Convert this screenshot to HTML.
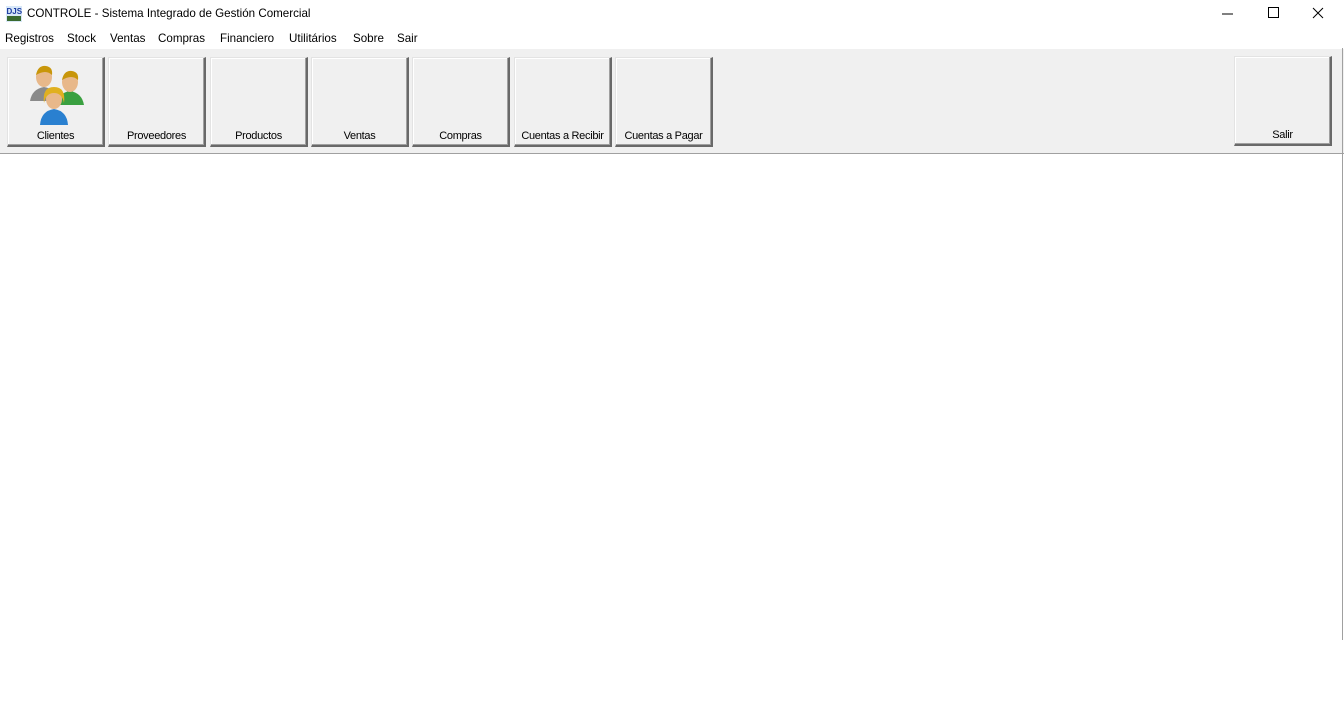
<!DOCTYPE html>
<html><head><meta charset="utf-8"><style>
*{margin:0;padding:0;box-sizing:border-box}
body{width:1344px;height:716px;background:#fff;font-family:"Liberation Sans",sans-serif;font-size:12px;color:#000;position:relative;overflow:hidden}
.abs{position:absolute}
.title{left:27px;top:7px;font-size:11.6px;white-space:nowrap}
.m{position:absolute;top:32px;font-size:11.6px;white-space:nowrap;transform-origin:left top}
.tb{left:0;top:48px;width:1344px;height:106px;background:#f0f0f0;border-top:1px solid #fff;border-bottom:1px solid #a0a0a0}
.btn{position:absolute;top:57px;width:98px;height:90px;background:#f0f0f0;border-top:1px solid #e3e3e3;border-left:1px solid #e3e3e3;border-right:2px solid #696969;border-bottom:2px solid #696969;box-shadow:inset -1px -1px 0 #a0a0a0, inset 1px 1px 0 #fff;text-align:center}
.btn span{position:absolute;bottom:3px;left:0;right:0;font-size:11px;letter-spacing:-0.3px;white-space:nowrap}
</style></head><body>
<svg class="abs" style="left:6px;top:6px" width="16" height="16" viewBox="0 0 16 16"><rect width="16" height="16" fill="#d8e8f8"/><text x="0.5" y="8" font-size="8" font-weight="bold" fill="#1a3aa0" font-family="Liberation Sans">DJS</text><rect x="1" y="10" width="14" height="5" fill="#3a6a30"/></svg>
<div class="abs title">CONTROLE - Sistema Integrado de Gestión Comercial</div>
<svg class="abs" style="left:1222px;top:6px" width="110" height="16"><line x1="0" y1="8" x2="11" y2="8" stroke="#000"/><rect x="46.5" y="1.5" width="10" height="10" fill="none" stroke="#000"/><path d="M91 2 L101 12 M101 2 L91 12" stroke="#000"/></svg>
<div class="m" style="left:5px">Registros</div>
<div class="m" style="left:67px">Stock</div>
<div class="m" style="left:110px">Ventas</div>
<div class="m" style="left:158px">Compras</div>
<div class="m" style="left:220px">Financiero</div>
<div class="m" style="left:289px">Utilitários</div>
<div class="m" style="left:353px">Sobre</div>
<div class="m" style="left:397px">Sair</div>
<div class="abs tb"></div>
<div class="btn" style="left:7px"><svg class="abs" style="left:20px;top:3px" width="58" height="66" viewBox="0 0 58 66">
<path d="M2 40 Q4 28 16 26 Q28 28 30 40 Z" fill="#8a8a8a"/>
<ellipse cx="16" cy="16" rx="8" ry="10" fill="#e8b88a"/><path d="M8 14 Q10 4 18 5 Q25 6 24 14 Q18 8 8 14Z" fill="#c8960a"/>
<path d="M28 44 Q30 32 42 30 Q54 32 56 44 Z" fill="#3aa040"/>
<ellipse cx="42" cy="21" rx="8" ry="10" fill="#e8b88a"/><path d="M34 19 Q36 9 44 10 Q51 11 50 19 Q44 13 34 19Z" fill="#c8960a"/>
<path d="M12 64 Q13 50 26 48 Q39 50 40 64 Z" fill="#2a80d0"/>
<ellipse cx="26" cy="38" rx="8" ry="10" fill="#e8b88a"/><path d="M16 42 Q14 26 26 26 Q38 26 36 42 Q34 32 26 32 Q18 32 16 42Z" fill="#e0b020"/>
</svg><span>Clientes</span></div>
<div class="btn" style="left:108px"><span>Proveedores</span></div>
<div class="btn" style="left:210px"><span>Productos</span></div>
<div class="btn" style="left:311px"><span>Ventas</span></div>
<div class="btn" style="left:412px"><span>Compras</span></div>
<div class="btn" style="left:514px"><span>Cuentas a Recibir</span></div>
<div class="btn" style="left:615px"><span>Cuentas a Pagar</span></div>
<div class="btn" style="left:1234px;top:56px"><span>Salir</span></div>
<div class="abs" style="left:1342px;top:48px;width:1px;height:592px;background:#a0a0a0"></div>
</body></html>
